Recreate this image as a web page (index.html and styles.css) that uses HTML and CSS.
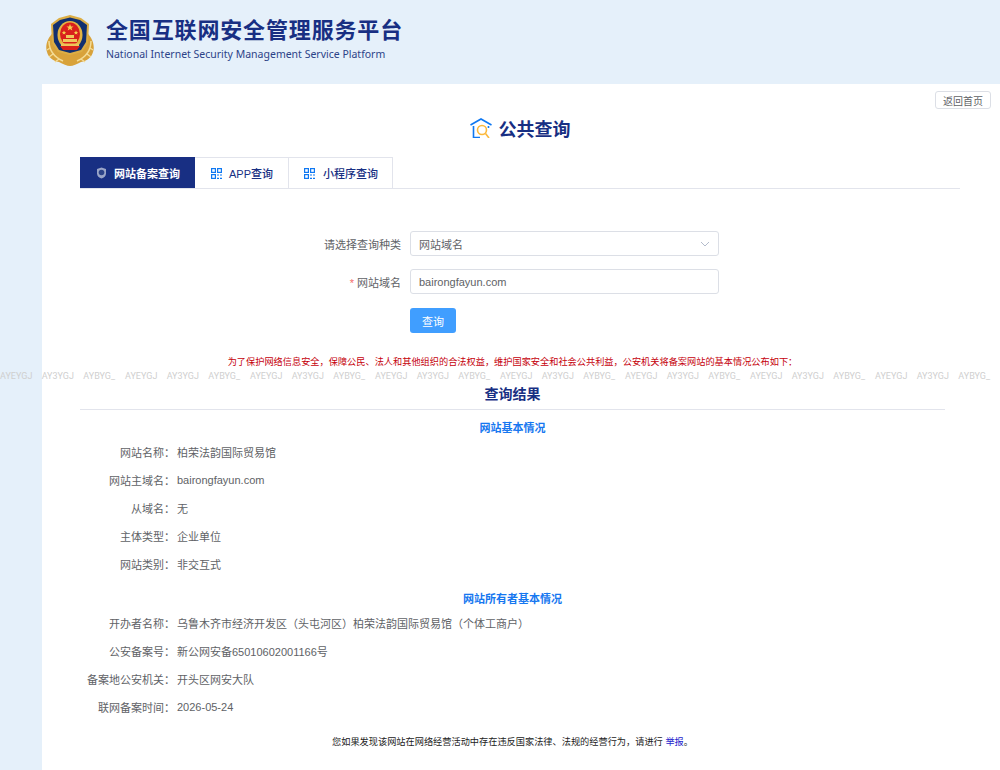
FILE: index.html
```html
<!DOCTYPE html>
<html lang="zh-CN">
<head>
    <meta charset="UTF-8">
    <title>全国互联网安全管理服务平台</title>
    <link rel="stylesheet" href="styles.css">
</head>
<body>
    <header class="site-header">
        <svg class="emblem" width="48" height="51" viewBox="0 0 48 51">
            <path d="M7 18C1 23 -1 32 1 37C2 42 7 46 13 47C17 49 21 51 24 51C27 51 31 49 35 47C41 46 46 42 47 37C49 32 47 23 41 18L36 32L24 38L12 32Z" fill="#d8a23a"/>
            <path d="M3 26C3 35 8 42 17 46M45 26C45 35 40 42 31 46M4 33L1 35M44 33L47 35M7 39L3 42M41 39L45 42M13 44L9 47M35 44L39 47" fill="none" stroke="#f4dc95" stroke-width="1.5"/>
            <path d="M24 0L35 3L43 9L42 28L36 37L24 40L12 37L6 28L5 9L13 3Z" fill="#dcae45"/>
            <path d="M24 2.500L34 5L41 10L40 27L35 35L24 38L13 35L8 27L7 10L14 5Z" fill="#12306f"/>
            <ellipse cx="24" cy="20" rx="12.500" ry="14" fill="#e3b442"/>
            <ellipse cx="24" cy="19" rx="10" ry="11.500" fill="#d9201c"/>
            <path d="M24 9l1 2.400h2.500l-2 1.500 0.800 2.500-2.300-1.500-2.300 1.500 0.800-2.500-2-1.500h2.500z" fill="#f5d04e"/>
            <path d="M18 15.500l0.700 1.500 1.500 0.100-1.200 1 0.400 1.500-1.400-0.800-1.400 0.800 0.400-1.500-1.200-1 1.500-0.100zM30 15.500l0.700 1.500 1.500 0.100-1.200 1 0.400 1.500-1.400-0.800-1.400 0.800 0.400-1.500-1.200-1 1.500-0.100z" fill="#f5d04e"/>
            <path d="M17 24H31V27H17ZM20 20H28V23H20Z" fill="#f0c95c"/>
            <path d="M14 31H34L31 35H17Z" fill="#d9201c"/>
            <path d="M15 28.500H33V31H15Z" fill="#eec65a"/>
        </svg>
        <div class="brand">
            <h1 class="brand-title">全国互联网安全管理服务平台</h1>
            <div class="brand-sub">National Internet Security Management Service Platform</div>
        </div>
    </header>

    <main class="main-panel">
        <div class="back-row"><button class="back-btn" type="button">返回首页</button></div>
        <div class="page-title">
            <svg width="22" height="20" viewBox="0 0 22 20" fill="none" stroke-width="1.6">
                <path d="M0.500 7L11 1L21.500 7" stroke="#0f78f2"/>
                <path d="M3.500 8V19.500H10M18.500 8V10" stroke="#0f78f2"/>
                <circle cx="12" cy="12" r="4.500" stroke="#fcb93c"/>
                <path d="M15.500 15.500L19 20" stroke="#fcb93c"/>
            </svg>
            <span>公共查询</span>
        </div>

        <nav class="tabs">
            <div class="tab tab-active">
                <svg class="tab-icon" width="11" height="12" viewBox="0 0 11 12">
                    <path d="M5.500 0.500L10 2V6.500C10 9 8 10.800 5.500 11.500C3 10.800 1 9 1 6.500V2Z" fill="#9aa5c8"/>
                    <circle cx="5.500" cy="5.500" r="2.800" fill="#2c4388"/>
                </svg>
                <span>网站备案查询</span>
            </div>
            <div class="tab tab-app">
                <svg class="tab-icon" width="11" height="11" viewBox="0 0 11 11" fill="none" stroke="#0f78f2" stroke-width="1.200">
                    <rect x="0.600" y="0.600" width="3.800" height="3.800"/>
                    <rect x="6.600" y="0.600" width="3.800" height="3.800"/>
                    <rect x="0.600" y="6.600" width="3.800" height="3.800"/>
                    <path d="M6 7H8M9 7H11M6 10.400H8M9 10.400H11"/>
                </svg>
                <span>APP查询</span>
            </div>
            <div class="tab tab-mini">
                <svg class="tab-icon" width="11" height="11" viewBox="0 0 11 11" fill="none" stroke="#0f78f2" stroke-width="1.200">
                    <rect x="0.600" y="0.600" width="3.800" height="3.800"/>
                    <rect x="6.600" y="0.600" width="3.800" height="3.800"/>
                    <rect x="0.600" y="6.600" width="3.800" height="3.800"/>
                    <path d="M6 7H8M9 7H11M6 10.400H8M9 10.400H11"/>
                </svg>
                <span>小程序查询</span>
            </div>
        </nav>

        <form class="query-form">
            <div class="form-row">
                <label class="form-label">请选择查询种类</label>
                <div class="field field-select">
                    <span>网站域名</span>
                    <svg width="10" height="6" viewBox="0 0 10 6" fill="none" stroke="#b4bccc"><path d="M1 1L5 5L9 1"/></svg>
                </div>
            </div>
            <div class="form-row form-row-input">
                <label class="form-label"><em class="required">*</em> 网站域名</label>
                <div class="field">bairongfayun.com</div>
            </div>
            <div class="form-row form-row-btn">
                <span class="form-label"></span>
                <button class="query-btn" type="button">查询</button>
            </div>
        </form>

        <p class="notice">为了保护网络信息安全，保障公民、法人和其他组织的合法权益，维护国家安全和社会公共利益，公安机关将备案网站的基本情况公布如下：</p>

        <section class="result">
            <h2 class="result-title">查询结果</h2>

            <h3 class="section-title">网站基本情况</h3>
            <dl class="info-list">
                <dt>网站名称：</dt><dd>柏荣法韵国际贸易馆</dd>
                <dt>网站主域名：</dt><dd>bairongfayun.com</dd>
                <dt>从域名：</dt><dd>无</dd>
                <dt>主体类型：</dt><dd>企业单位</dd>
                <dt>网站类别：</dt><dd>非交互式</dd>
            </dl>

            <h3 class="section-title section-owner">网站所有者基本情况</h3>
            <dl class="info-list info-owner">
                <dt>开办者名称：</dt><dd>乌鲁木齐市经济开发区（头屯河区）柏荣法韵国际贸易馆（个体工商户）</dd>
                <dt>公安备案号：</dt><dd>新公网安备65010602001166号</dd>
                <dt>备案地公安机关：</dt><dd>开头区网安大队</dd>
                <dt>联网备案时间：</dt><dd>2026-05-24</dd>
            </dl>

            <p class="report">您如果发现该网站在网络经营活动中存在违反国家法律、法规的经营行为，请进行 <a href="#">举报</a>。</p>
        </section>
    </main>

    <div class="watermark">
        <span>AYEYGJ</span><span>AY3YGJ</span><span>AYBYG_</span>
        <span>AYEYGJ</span><span>AY3YGJ</span><span>AYBYG_</span>
        <span>AYEYGJ</span><span>AY3YGJ</span><span>AYBYG_</span>
        <span>AYEYGJ</span><span>AY3YGJ</span><span>AYBYG_</span>
        <span>AYEYGJ</span><span>AY3YGJ</span><span>AYBYG_</span>
        <span>AYEYGJ</span><span>AY3YGJ</span><span>AYBYG_</span>
        <span>AYEYGJ</span><span>AY3YGJ</span><span>AYBYG_</span>
        <span>AYEYGJ</span><span>AY3YGJ</span><span>AYBYG_</span>
    </div>
</body>
</html>
```

FILE: styles.css
```css
:root {
    --page-bg: #e5f0fa;
    --navy: #182f83;
    --blue: #1677f0;
    --text: #606266;
    --line: #e2e4ec;
}
html, body {
    margin: 0;
    padding: 0;
    height: 770px;
    overflow: hidden;
}
body {
    position: relative;
    background: var(--page-bg);
    font-family: "Liberation Sans", "Noto Sans CJK SC", sans-serif;
    font-size: 11px;
    color: var(--text);
}
.site-header {
    height: 84px;
    box-sizing: border-box;
    padding: 15px 0 0 46px;
    display: flex;
    align-items: flex-start;
    gap: 12px;
}
.emblem {
    flex: none;
}
.brand-title {
    margin: 3px 0 0 0;
    font-size: 22px;
    line-height: 26px;
    font-weight: 700;
    letter-spacing: 0.85px;
    color: var(--navy);
}
.brand-sub {
    margin-top: 3px;
    font-family: "Noto Sans", sans-serif;
    font-size: 10.5px;
    line-height: 14px;
    color: #2c4388;
}
.main-panel {
    margin-left: 42px;
    height: 686px;
    box-sizing: border-box;
    padding: 7px 40px 0 38px;
    background: #fff;
}
.back-row {
    display: flex;
    justify-content: flex-end;
    margin-right: -31px;
}
.back-btn {
    width: 56px;
    height: 18px;
    padding: 0;
    background: #fff;
    border: 1px solid #dcdfe6;
    border-radius: 3px;
    font-family: inherit;
    font-size: 10px;
    color: var(--text);
}
.page-title {
    margin-top: 8px;
    height: 22px;
    display: flex;
    align-items: center;
    justify-content: center;
    gap: 7px;
    font-size: 18px;
    font-weight: 700;
    color: var(--navy);
}
.tabs {
    margin-top: 18px;
    height: 31px;
    display: flex;
    border-bottom: 1px solid var(--line);
}
.tab {
    display: flex;
    align-items: center;
    box-sizing: border-box;
    border-top: 1px solid var(--line);
    border-right: 1px solid var(--line);
    font-weight: 500;
    color: var(--navy);
}
.tab-active {
    width: 115px;
    padding-left: 16px;
    gap: 7px;
    background: var(--navy);
    border: 0;
    font-weight: 700;
    color: #fff;
}
.tab-app {
    width: 94px;
    padding-left: 16px;
    gap: 7px;
}
.tab-mini {
    width: 104px;
    padding-left: 15px;
    gap: 8px;
}
.query-form {
    margin-top: 42px;
}
.form-row {
    display: flex;
    align-items: center;
    gap: 9px;
}
.form-row-input {
    margin-top: 13px;
}
.form-row-btn {
    margin-top: 14px;
}
.form-label {
    width: 321px;
    text-align: right;
}
.required {
    font-style: normal;
    color: #f56c6c;
}
.field {
    width: 309px;
    height: 25px;
    box-sizing: border-box;
    padding: 0 8px;
    display: flex;
    align-items: center;
    border: 1px solid #dcdfe6;
    border-radius: 3px;
    background: #fff;
}
.field-select {
    justify-content: space-between;
}
.query-btn {
    width: 46px;
    height: 25px;
    padding: 0;
    border: 0;
    border-radius: 3px;
    background: #409eff;
    font-family: inherit;
    font-size: 11px;
    color: #fff;
}
.notice {
    margin: 22px 0 0 0;
    padding-right: 15px;
    font-size: 9.2px;
    line-height: 14px;
    text-align: center;
    color: #c5000b;
}
.result {
    padding-right: 15px;
}
.result-title {
    margin: 15px 0 0 0;
    padding-bottom: 5px;
    border-bottom: 1px solid var(--line);
    font-size: 14px;
    line-height: 20px;
    font-weight: 700;
    text-align: center;
    color: var(--navy);
}
.section-title {
    margin: 11px 0 0 0;
    font-size: 11px;
    line-height: 14px;
    font-weight: 700;
    text-align: center;
    color: var(--blue);
}
.section-owner {
    margin-top: 14px;
}
.info-list {
    margin: 3px 0 0 0;
    display: grid;
    grid-template-columns: 95px 1fr;
    column-gap: 2px;
    grid-auto-rows: 28px;
    align-items: center;
}
.info-list dt {
    text-align: right;
}
.info-list dd {
    margin: 0;
}
.report {
    margin: 14px 0 0 0;
    font-size: 9.2px;
    line-height: 14px;
    text-align: center;
    color: #222;
}
.report a {
    color: #2222cc;
    text-decoration: none;
}
.watermark {
    position: absolute;
    top: 369px;
    left: 0;
    width: 1000px;
    display: grid;
    grid-template-columns: repeat(24, 1fr);
    font-family: Roboto, sans-serif;
    font-size: 9px;
    line-height: 14px;
    color: #cfcfcf;
    pointer-events: none;
}
```
